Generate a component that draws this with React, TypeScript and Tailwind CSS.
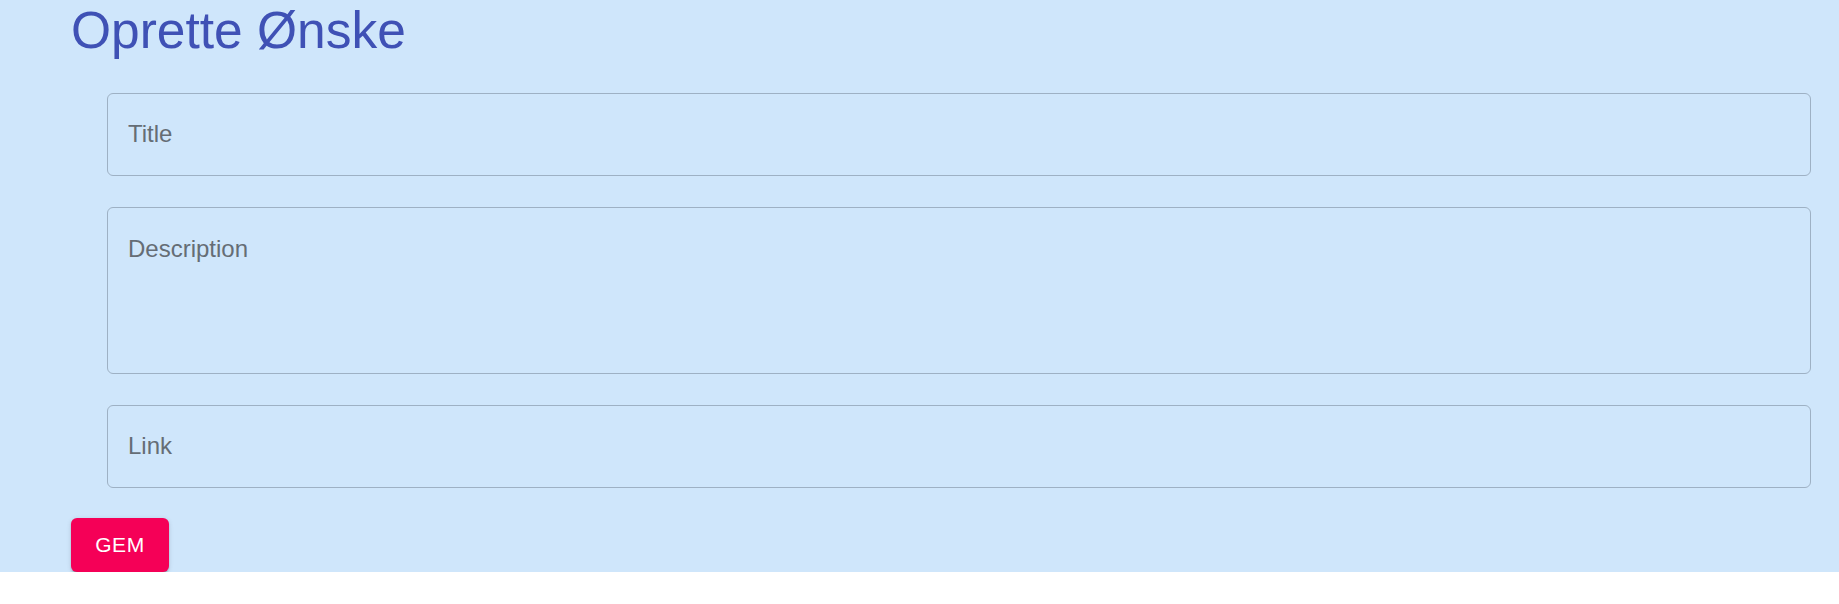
import React from "react";

export default function App() {
  return (
    <div className="w-full bg-white" style={{ fontFamily: '"Liberation Sans", Arial, sans-serif' }}>
      <div className="h-[572px] bg-[#cfe6fb] pl-[71px] pr-[28px]">
        <h1 className="mt-0 pt-[1px] text-[51.5px] leading-[59.5px] text-[#3f51b5]">Oprette Ønske</h1>
        <form className="mt-[32px] flex flex-col" onSubmit={(e) => e.preventDefault()}>
          <div className="ml-[36px] flex flex-col gap-[31px]">
            <input
              type="text"
              placeholder="Title"
              className="h-[83px] w-full rounded-[6px] border border-[#9eb1c4] bg-transparent px-[20px] text-[24px] text-[#333] outline-none placeholder:text-[#656d75]"
            />
            <textarea
              placeholder="Description"
              className="block h-[167px] w-full resize-none rounded-[6px] border border-[#9eb1c4] bg-transparent px-[20px] pt-[24px] text-[24px] leading-[34.5px] text-[#333] outline-none placeholder:text-[#656d75]"
            />
            <input
              type="text"
              placeholder="Link"
              className="h-[83px] w-full rounded-[6px] border border-[#9eb1c4] bg-transparent px-[20px] text-[24px] text-[#333] outline-none placeholder:text-[#656d75]"
            />
          </div>
          <div className="mt-[30px]">
            <button
              type="submit"
              className="h-[54px] w-[98px] rounded-[6px] bg-[#f50057] text-[21px] font-medium uppercase tracking-[0.6px] text-white shadow-[0_3px_1px_-2px_rgba(0,0,0,0.2),0_2px_2px_0_rgba(0,0,0,0.14),0_1px_5px_0_rgba(0,0,0,0.12)]"
            >
              Gem
            </button>
          </div>
        </form>
      </div>
    </div>
  );
}
